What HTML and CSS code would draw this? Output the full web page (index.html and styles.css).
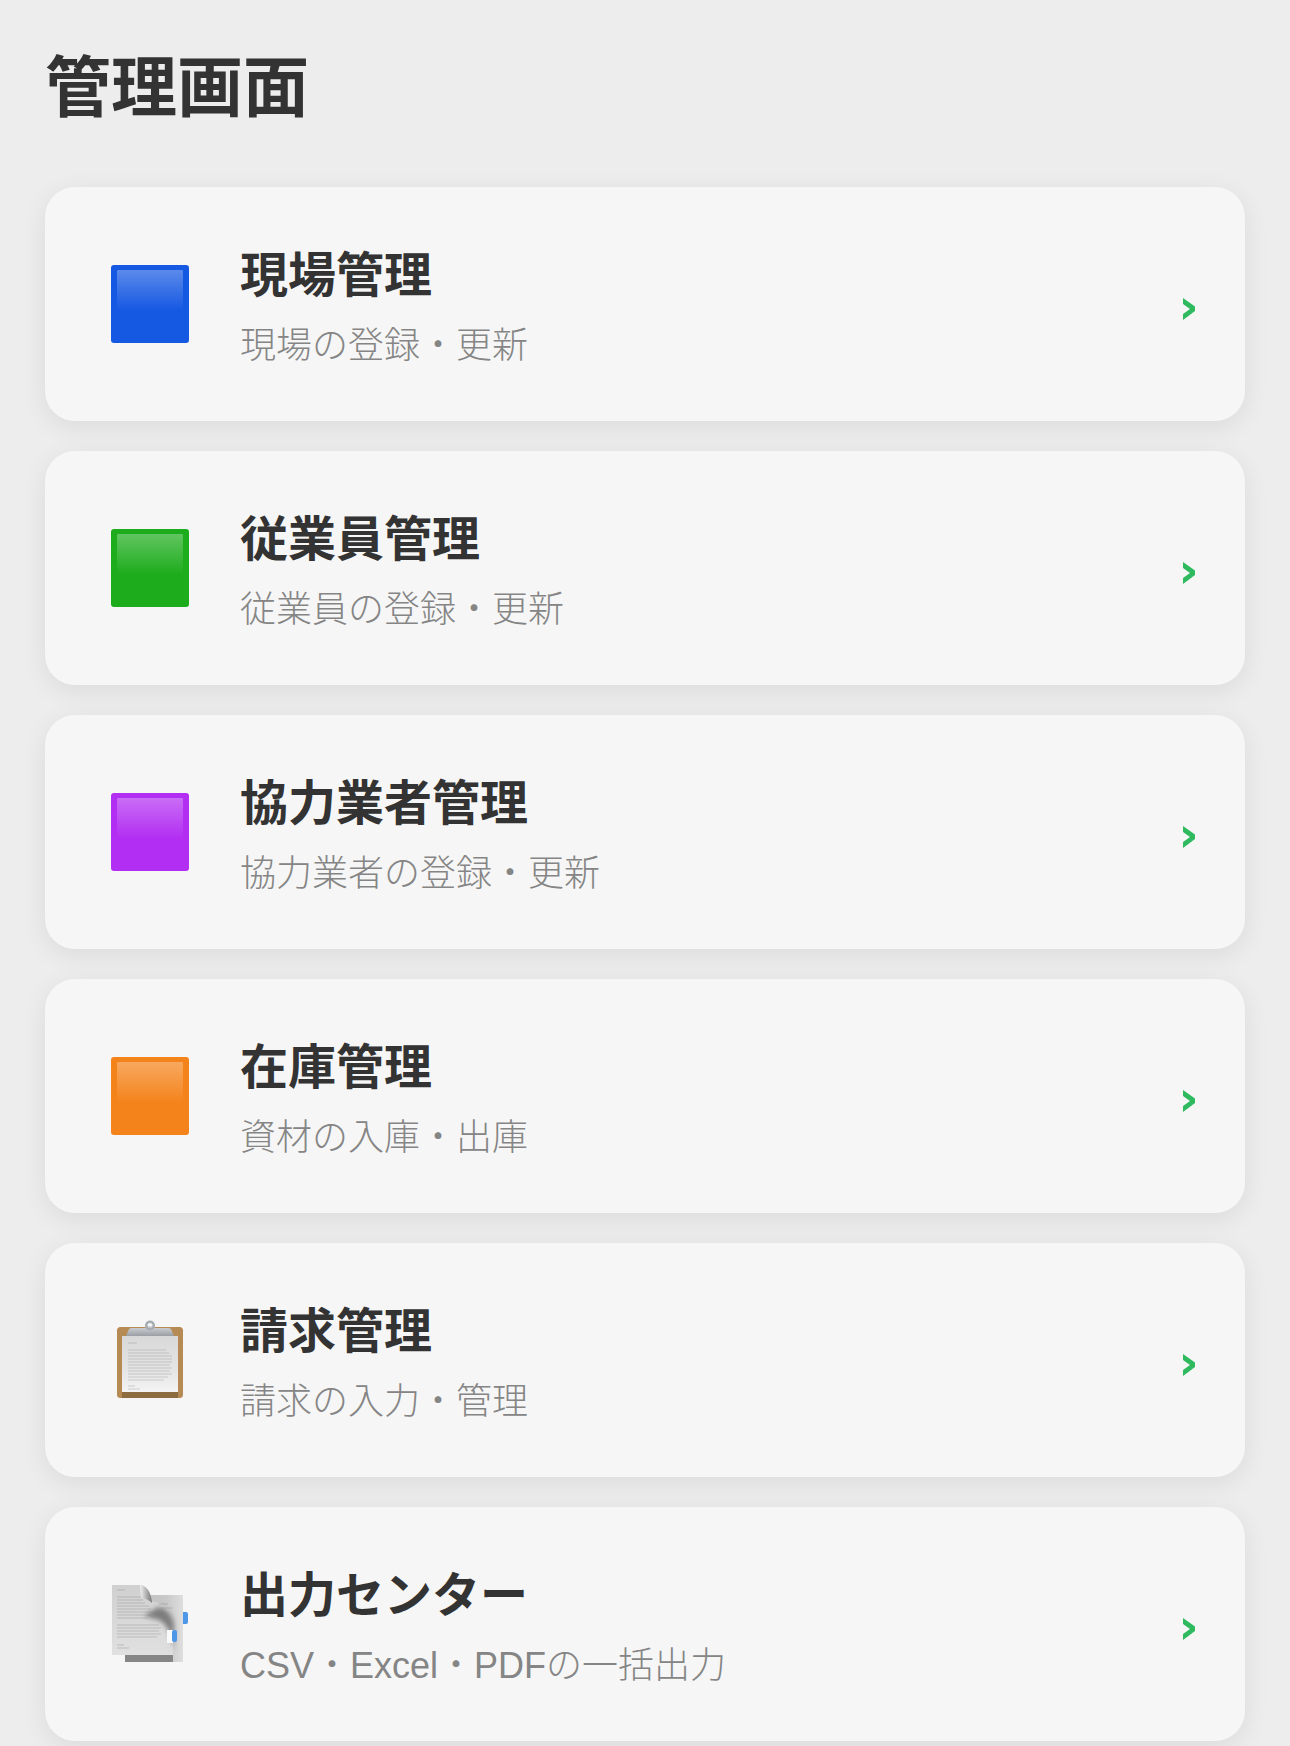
FILE: index.html
```html
<!DOCTYPE html>
<html lang="ja">
<head>
<meta charset="utf-8">
<title>管理画面</title>
<link rel="stylesheet" href="styles.css">
</head>
<body>
<svg class="defs" width="0" height="0" aria-hidden="true">
  <defs>
    <linearGradient id="gloss" x1="0" y1="0" x2="0" y2="1">
      <stop offset="0" stop-color="#fff" stop-opacity=".3"/>
      <stop offset=".6" stop-color="#fff" stop-opacity="0"/>
    </linearGradient>
    <linearGradient id="paper" x1="0" y1="0" x2="0" y2="1">
      <stop offset="0" stop-color="#d8d8d8"/>
      <stop offset=".65" stop-color="#e6e6e6"/>
      <stop offset="1" stop-color="#f4f4f4"/>
    </linearGradient>
    <linearGradient id="clip" x1="0" y1="0" x2="0" y2="1">
      <stop offset="0" stop-color="#d4d7da"/>
      <stop offset="1" stop-color="#9a9fa5"/>
    </linearGradient>
    <linearGradient id="sheet" x1="0" y1="0" x2="1" y2="0">
      <stop offset="0" stop-color="#bdbdbd"/>
      <stop offset=".7" stop-color="#c8c8c8"/>
      <stop offset="1" stop-color="#dedede"/>
    </linearGradient>
    <linearGradient id="front" x1="0" y1="0" x2="0" y2="1">
      <stop offset="0" stop-color="#d0d0d0"/>
      <stop offset="1" stop-color="#e0e0e0"/>
    </linearGradient>
    <linearGradient id="curl" x1="0" y1="0" x2="1" y2="0">
      <stop offset="0" stop-color="#f2f2f2"/>
      <stop offset=".6" stop-color="#a8a8a8"/>
      <stop offset="1" stop-color="#777"/>
    </linearGradient>
    <filter id="soft" x="-30%" y="-30%" width="160%" height="160%"><feGaussianBlur stdDeviation="2.4"/></filter>
    <filter id="softer" x="-10%" y="-10%" width="120%" height="120%"><feGaussianBlur stdDeviation=".55"/></filter>
  </defs>
</svg>
<main class="page">
  <h1 class="page-title">管理画面</h1>
  <div class="menu">
    <a class="card">
      <svg class="icon" viewBox="0 0 78 78"><rect width="78" height="78" rx="3" fill="#1558e2"/><rect x="6" y="5" width="66" height="68" rx="1" fill="url(#gloss)"/></svg>
      <div class="text"><div class="title">現場管理</div><div class="sub">現場の登録・更新</div></div>
      <svg class="chev" viewBox="0 0 12 22"><polygon points="0,0 12,8.5 12,13 0,22 0,16 7,11 0,6" fill="#2fba5f"/></svg>
    </a>
    <a class="card">
      <svg class="icon" viewBox="0 0 78 78"><rect width="78" height="78" rx="3" fill="#1dac1c"/><rect x="6" y="5" width="66" height="68" rx="1" fill="url(#gloss)"/></svg>
      <div class="text"><div class="title">従業員管理</div><div class="sub">従業員の登録・更新</div></div>
      <svg class="chev" viewBox="0 0 12 22"><polygon points="0,0 12,8.5 12,13 0,22 0,16 7,11 0,6" fill="#2fba5f"/></svg>
    </a>
    <a class="card">
      <svg class="icon" viewBox="0 0 78 78"><rect width="78" height="78" rx="3" fill="#b22ef2"/><rect x="6" y="5" width="66" height="68" rx="1" fill="url(#gloss)"/></svg>
      <div class="text"><div class="title">協力業者管理</div><div class="sub">協力業者の登録・更新</div></div>
      <svg class="chev" viewBox="0 0 12 22"><polygon points="0,0 12,8.5 12,13 0,22 0,16 7,11 0,6" fill="#2fba5f"/></svg>
    </a>
    <a class="card">
      <svg class="icon" viewBox="0 0 78 78"><rect width="78" height="78" rx="3" fill="#f4831b"/><rect x="6" y="5" width="66" height="68" rx="1" fill="url(#gloss)"/></svg>
      <div class="text"><div class="title">在庫管理</div><div class="sub">資材の入庫・出庫</div></div>
      <svg class="chev" viewBox="0 0 12 22"><polygon points="0,0 12,8.5 12,13 0,22 0,16 7,11 0,6" fill="#2fba5f"/></svg>
    </a>
    <a class="card">
      <svg class="icon" viewBox="0 0 78 78">
        <g filter="url(#softer)">
          <rect x="6" y="6" width="66" height="71" rx="3.5" fill="#b58a52"/>
          <rect x="11" y="70" width="56" height="7" fill="#8d6c40"/>
          <rect x="11" y="15" width="56" height="56" fill="url(#paper)"/>
          <path d="M17 22h9M17 29h38M17 32h41M17 35h44M17 38h44M17 41h44M17 44h42M17 47h44M17 50h42M17 53h44M17 56h40M17 59h36M17 65h7M17 68h12" stroke="#808080" stroke-width=".9" opacity=".36"/>
          <path d="M15 15 L18 8 Q19 7 21 7 H33 C35 7 35 6 36 5 H42 C43 6 43 7 45 7 H57 Q59 7 60 8 L63 15 Z" fill="url(#clip)"/>
          <circle cx="39" cy="4.5" r="3.8" fill="none" stroke="#a6acb2" stroke-width="2.6"/>
        </g>
      </svg>
      <div class="text"><div class="title">請求管理</div><div class="sub">請求の入力・管理</div></div>
      <svg class="chev" viewBox="0 0 12 22"><polygon points="0,0 12,8.5 12,13 0,22 0,16 7,11 0,6" fill="#2fba5f"/></svg>
    </a>
    <a class="card">
      <svg class="icon" viewBox="0 0 78 78">
        <g filter="url(#softer)">
          <rect x="70" y="27" width="7" height="12" rx="2" fill="#4d96e8"/>
          <rect x="67" y="27" width="5" height="12" fill="#f6f6f6"/>
          <rect x="14" y="10" width="58" height="67" fill="url(#sheet)"/>
          <rect x="14" y="70" width="48" height="7" fill="#868686"/>
          <path d="M1 0H30C35 1 39 6 40 16C50 18 61 21 62 38V70H1Z" fill="url(#front)"/>
          <path d="M29 0C36 1 40 7 41 18C38 15 34 13 30 13Z" fill="url(#curl)"/>
          <path d="M47 22C56 23 62 30 63 40V66C61 52 58 42 50 36C44 33 38 33 33 31Z" fill="#7d7d7d" filter="url(#soft)"/>
          <path d="M6 5h8M6 12h24M6 15h26M6 18h28M6 21h32M6 24h34M6 27h36M6 30h34M6 33h30M6 40h42M6 43h44M6 46h42M6 49h44M6 52h40M6 60h7M6 63h12M48 19h9M50 23h12" stroke="#777" stroke-width=".9" opacity=".36"/>
          <rect x="56" y="45" width="6" height="13" fill="#fafafa"/>
          <rect x="61" y="45" width="5" height="12" rx="2" fill="#4d96e8"/>
        </g>
      </svg>
      <div class="text"><div class="title">出力センター</div><div class="sub">CSV・Excel・PDFの一括出力</div></div>
      <svg class="chev" viewBox="0 0 12 22"><polygon points="0,0 12,8.5 12,13 0,22 0,16 7,11 0,6" fill="#2fba5f"/></svg>
    </a>
  </div>
</main>
</body>
</html>
```
FILE: styles.css
```css
* { box-sizing: border-box; }
html, body { margin: 0; height: 100%; }
body {
  background: #ededed;
  color: #333;
  font-family: "Liberation Sans", "Noto Sans CJK JP", sans-serif;
  overflow: hidden;
}
.defs { position: absolute; }
.page { padding: 42px 45px 0; }
.page-title {
  margin: 0 0 52px;
  font-size: 66px;
  line-height: 93px;
  font-weight: 700;
  color: #333;
}
.menu { display: flex; flex-direction: column; gap: 30px; }
.card {
  display: flex;
  align-items: center;
  height: 234px;
  padding: 0 50px 0 66px;
  background: #f6f6f6;
  border-radius: 30px;
  box-shadow: 0 6px 26px rgba(0, 0, 0, .08);
}
.icon { width: 78px; height: 78px; flex: none; overflow: visible; }
.text { flex: 1; margin-left: 51px; padding-top: 6px; }
.title {
  font-size: 48px;
  line-height: 68px;
  font-weight: 700;
  color: #333;
}
.sub {
  margin-top: 10px;
  font-size: 36px;
  line-height: 52px;
  font-weight: 300;
  color: #858585;
}
.chev { width: 12px; height: 22px; flex: none; margin-top: 10px; }
```
